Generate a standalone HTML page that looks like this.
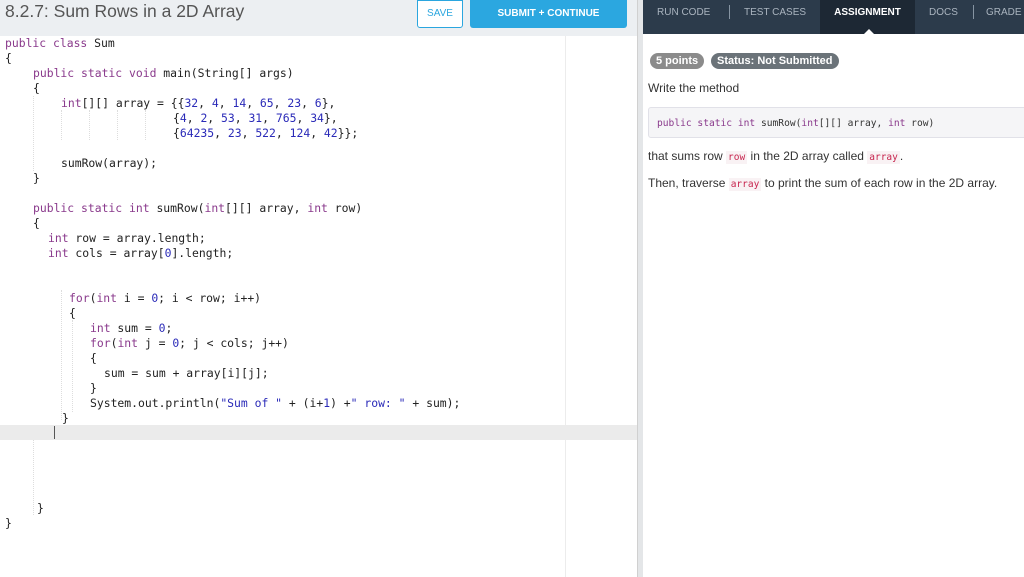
<!DOCTYPE html>
<html><head><style>
*{margin:0;padding:0;box-sizing:border-box}
body{width:1024px;height:577px;overflow:hidden;background:#fff;font-family:"Liberation Sans",sans-serif;position:relative}
.hdr{position:absolute;left:0;top:0;width:638px;height:36px;background:#eceff2}
.title{position:absolute;left:5px;top:1px;font-size:17.5px;color:#555}
.save{position:absolute;left:417px;top:0;width:46px;height:28px;border:1px solid #2aa6df;background:#fff;color:#2aa6df;font-size:10px;text-align:center;line-height:26px;border-radius:0 0 3px 3px}
.sub{position:absolute;left:470px;top:0;width:157px;height:28px;background:#2ba7e0;color:#fff;font-size:10px;font-weight:bold;text-align:center;line-height:28px;border-radius:0 0 3px 3px}
.code{position:absolute;left:0;top:36px;width:637px;height:541px;background:#fff}
.margin{position:absolute;left:565px;top:36px;width:1px;height:541px;background:#ececec}
.cur{position:absolute;left:0;top:425px;width:637px;height:15px;background:#ebebeb}
.caret{position:absolute;left:54px;top:426px;width:1px;height:13px;background:#555}
.ln{position:absolute;font-family:"DejaVu Sans Mono","Liberation Mono",monospace;font-size:11.4px;color:#222;white-space:pre;line-height:15px}
.k{color:#8a3a8c}.n{color:#2a2ab8}.s{color:#2a2ab8}
.guide{position:absolute;width:0;border-left:1px dotted #ddd}
.div{position:absolute;left:637px;top:0;width:6px;height:577px;background:#e4e6e8;border-left:1px solid #d0d0d0}
.nav{position:absolute;left:643px;top:0;width:381px;height:34px;background:#2c3b4b}
.tab{position:absolute;top:0;height:34px;line-height:25px;font-size:10px;color:#aab4bf}
.act{background:#1d2834;color:#fff;font-weight:bold;text-align:center}
.sep{position:absolute;top:5px;width:1px;height:14px;background:#8694a2}
.badge{position:absolute;top:53px;height:16px;line-height:16px;border-radius:8px;color:#fff;font-size:11px;font-weight:bold;padding:0 6px}
.txt{position:absolute;font-size:12px;color:#333;white-space:nowrap}
.ic{font-family:"DejaVu Sans Mono","Liberation Mono",monospace;font-size:9.5px;color:#c7254e;background:#f9f2f4;padding:1px 2px}
.box{position:absolute;left:648px;top:107px;width:380px;height:31px;background:#f5f5f7;border:1px solid #e1e1e8;border-radius:3px;font-family:"DejaVu Sans Mono","Liberation Mono",monospace;font-size:9.6px;line-height:31px;padding-left:8px;color:#333}
</style></head><body>
<div class="hdr"></div>
<div class="title">8.2.7: Sum Rows in a 2D Array</div>
<div class="save">SAVE</div>
<div class="sub">SUBMIT + CONTINUE</div>
<div class="code"></div>
<div class="margin"></div>
<div class="cur"></div>
<div class="caret"></div>
<div class="guide" style="left:33px;top:96px;height:75px"></div>
<div class="guide" style="left:61px;top:110px;height:30px"></div>
<div class="guide" style="left:89px;top:110px;height:30px"></div>
<div class="guide" style="left:117px;top:110px;height:30px"></div>
<div class="guide" style="left:145px;top:110px;height:30px"></div>
<div class="guide" style="left:61px;top:290px;height:130px"></div>
<div class="guide" style="left:72px;top:320px;height:92px"></div>
<div class="guide" style="left:33px;top:440px;height:75px"></div>
<div class="ln" style="left:5px;top:36px"><span class="k">public class</span> Sum</div>
<div class="ln" style="left:5px;top:51px">{</div>
<div class="ln" style="left:33px;top:66px"><span class="k">public static void</span> main(String[] args)</div>
<div class="ln" style="left:33px;top:81px">{</div>
<div class="ln" style="left:61px;top:96px"><span class="k">int</span>[][] array = {{<span class="n">32</span>, <span class="n">4</span>, <span class="n">14</span>, <span class="n">65</span>, <span class="n">23</span>, <span class="n">6</span>},</div>
<div class="ln" style="left:173px;top:111px">{<span class="n">4</span>, <span class="n">2</span>, <span class="n">53</span>, <span class="n">31</span>, <span class="n">765</span>, <span class="n">34</span>},</div>
<div class="ln" style="left:173px;top:126px">{<span class="n">64235</span>, <span class="n">23</span>, <span class="n">522</span>, <span class="n">124</span>, <span class="n">42</span>}};</div>
<div class="ln" style="left:61px;top:156px">sumRow(array);</div>
<div class="ln" style="left:33px;top:171px">}</div>
<div class="ln" style="left:33px;top:201px"><span class="k">public static int</span> sumRow(<span class="k">int</span>[][] array, <span class="k">int</span> row)</div>
<div class="ln" style="left:33px;top:216px">{</div>
<div class="ln" style="left:48px;top:231px"><span class="k">int</span> row = array.length;</div>
<div class="ln" style="left:48px;top:246px"><span class="k">int</span> cols = array[<span class="n">0</span>].length;</div>
<div class="ln" style="left:69px;top:291px"><span class="k">for</span>(<span class="k">int</span> i = <span class="n">0</span>; i &lt; row; i++)</div>
<div class="ln" style="left:69px;top:306px">{</div>
<div class="ln" style="left:90px;top:321px"><span class="k">int</span> sum = <span class="n">0</span>;</div>
<div class="ln" style="left:90px;top:336px"><span class="k">for</span>(<span class="k">int</span> j = <span class="n">0</span>; j &lt; cols; j++)</div>
<div class="ln" style="left:90px;top:351px">{</div>
<div class="ln" style="left:104px;top:366px">sum = sum + array[i][j];</div>
<div class="ln" style="left:90px;top:381px">}</div>
<div class="ln" style="left:90px;top:396px">System.out.println(<span class="s">"Sum of "</span> + (i+<span class="n">1</span>) +<span class="s">" row: "</span> + sum);</div>
<div class="ln" style="left:62px;top:411px">}</div>
<div class="ln" style="left:37px;top:501px">}</div>
<div class="ln" style="left:5px;top:516px">}</div>
<div class="div"></div>
<div class="nav"></div>
<div class="tab" style="left:657px">RUN CODE</div>
<div class="sep" style="left:729px"></div>
<div class="tab" style="left:744px">TEST CASES</div>
<div class="tab act" style="left:820px;width:95px">ASSIGNMENT</div>
<div style="position:absolute;left:864px;top:29px;width:0;height:0;border-left:5px solid transparent;border-right:5px solid transparent;border-bottom:5px solid #fff"></div>
<div class="tab" style="left:929px">DOCS</div>
<div class="sep" style="left:973px"></div>
<div class="tab" style="left:986px">GRADE</div>
<div class="badge" style="left:650px;background:#8b8b8b">5 points</div>
<div class="badge" style="left:711px;background:#6b7379">Status: Not Submitted</div>
<div class="txt" style="left:648px;top:81px">Write the method</div>
<div class="box"><span class="k">public static int</span> sumRow(<span class="k">int</span>[][] array, <span class="k">int</span> row)</div>
<div class="txt" style="left:648px;top:149px">that sums row <span class="ic">row</span> in the 2D array called <span class="ic">array</span>.</div>
<div class="txt" style="left:648px;top:176px">Then, traverse <span class="ic">array</span> to print the sum of each row in the 2D array.</div>
</body></html>
